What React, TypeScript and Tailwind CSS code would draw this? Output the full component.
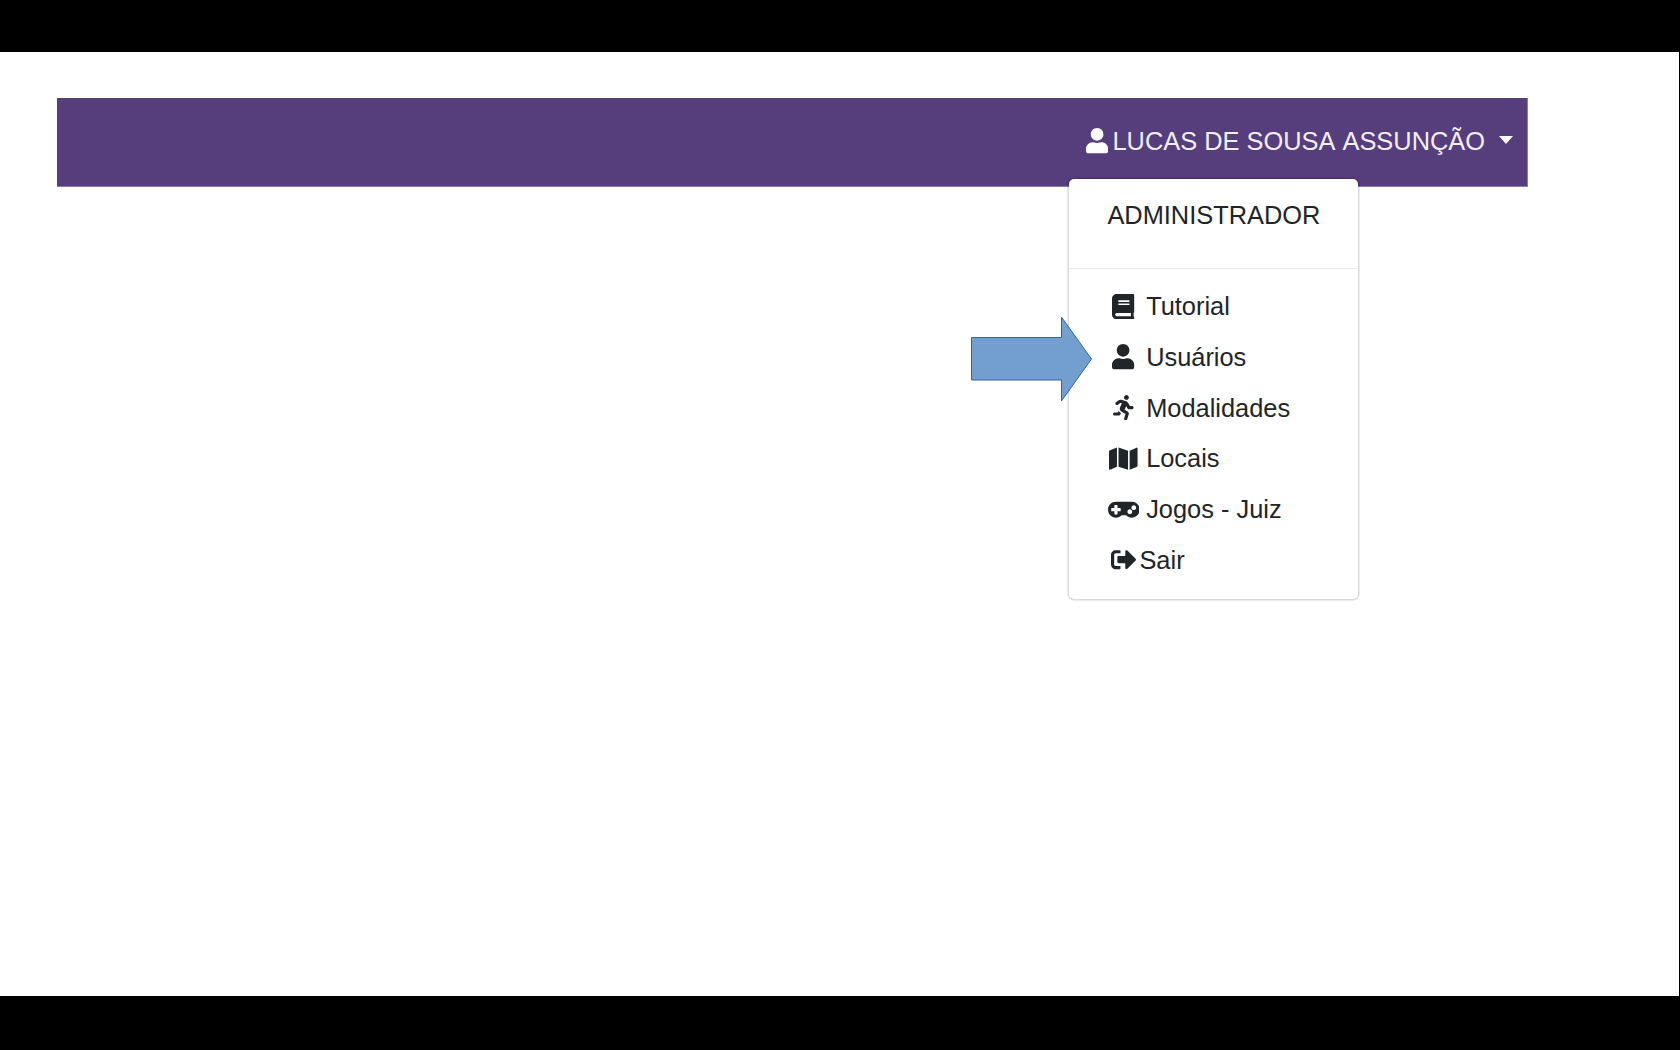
import type { ComponentType } from "react";
import { FaBook, FaMap, FaRunning, FaSignOutAlt, FaUser } from "react-icons/fa";

type Item = { label: string; icon: ComponentType<{ className?: string }>; width: string; spaced: boolean };

function Gamepad({ className }: { className?: string }) {
  return (
    <svg className={className} viewBox="0 0 640 512" fill="currentColor" aria-hidden="true">
      <path d="M480 96H160C71.6 96 0 167.6 0 256s71.6 160 160 160c44.8 0 85.2-18.4 114.2-48h91.5c29 29.6 69.5 48 114.2 48 88.4 0 160-71.6 160-160S568.4 96 480 96zM256 276c0 6.6-5.4 12-12 12h-52v52c0 6.6-5.4 12-12 12h-40c-6.600 0-12-5.400-12-12v-52H76c-6.600 0-12-5.400-12-12v-40c0-6.600 5.400-12 12-12h52v-52c0-6.600 5.400-12 12-12h40c6.600 0 12 5.400 12 12v52h52c6.600 0 12 5.400 12 12v40zm184 68c-26.500 0-48-21.500-48-48s21.500-48 48-48 48 21.500 48 48-21.500 48-48 48zm80-80c-26.500 0-48-21.500-48-48s21.500-48 48-48 48 21.500 48 48-21.500 48-48 48z" />
    </svg>
  );
}

const items: Item[] = [
  { label: "Tutorial", icon: FaBook, width: "w-[22.2px]", spaced: true },
  { label: "Usuários", icon: FaUser, width: "w-[22.2px]", spaced: true },
  { label: "Modalidades", icon: FaRunning, width: "w-[20.6px]", spaced: true },
  { label: "Locais", icon: FaMap, width: "w-[28.6px]", spaced: true },
  { label: "Jogos - Juiz", icon: Gamepad, width: "w-[31.75px]", spaced: true },
  { label: "Sair", icon: FaSignOutAlt, width: "w-[25.4px]", spaced: false },
];

function UserMenu() {
  return (
    <div className="absolute top-[80.7px] left-[1012.3px] h-[420.4px] w-[288.8px] rounded-[5px] bg-white pt-[11.3px] text-[#212529] shadow-[0_0_0_1.5px_rgba(0,0,0,0.15)]">
      <div className="flex h-[50.8px] items-center pl-[38.1px]">ADMINISTRADOR</div>
      <div className="mt-[26.8px] mb-[11.8px] h-[1.5px] bg-[#e9ecef]" />
      <ul>
        {items.map(({ label, icon: Icon, width, spaced }) => (
          <li key={label} className="flex h-[50.75px] items-center pl-[38.4px]">
            <span className="flex w-[31.75px] shrink-0 justify-center">
              <Icon className={`h-[25.4px] shrink-0 ${width}`} />
            </span>
            <span className={spaced ? "pl-[6.7px]" : ""}>{label}</span>
          </li>
        ))}
      </ul>
    </div>
  );
}

export default function App() {
  return (
    <div className="h-[1050px] w-[1680px] overflow-hidden bg-black pt-[52px] font-['Liberation_Sans',Arial,sans-serif] text-[25.4px] leading-[38.1px]">
      <main className="h-[944px] w-[1679px] bg-white pt-[46px] pl-[57px]">
        <nav className="relative flex h-[89px] w-[1471px] justify-end border-r border-b border-[#8d7aa8] bg-[#563d7c] pr-[14.5px] text-white">
          <div className="flex h-[86px] items-center">
            <FaUser className="mr-[4.4px] h-[25.4px] w-[22.2px]" />
            <span className="text-[#f1eef5] [font-kerning:none]">LUCAS DE SOUSA ASSUNÇÃO</span>
            <span className="mt-[-2px] ml-[13.5px] h-0 w-0 border-x-[7.6px] border-t-[8px] border-x-transparent border-t-white" />
          </div>
          <UserMenu />
        </nav>
      </main>
      <svg className="absolute top-[315px] left-[970px]" width="124" height="88" viewBox="0 0 124 88" aria-hidden="true">
        <path d="M1.5 22.5H91.5V2L121.5 44L91.5 86V65H1.5Z" fill="#729fcf" stroke="#3465a4" strokeWidth="1" />
      </svg>
    </div>
  );
}
